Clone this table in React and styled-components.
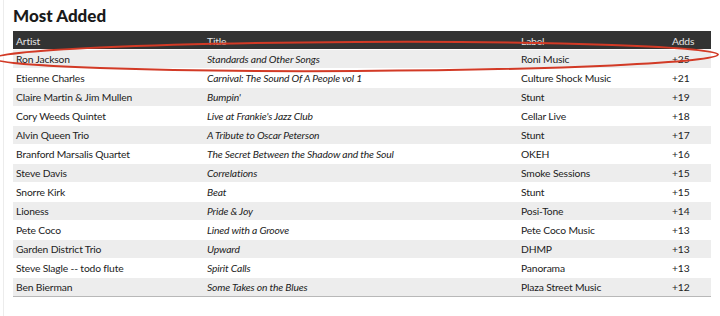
import React from "react";
import styled, { createGlobalStyle } from "styled-components";

const GlobalStyle = createGlobalStyle`
    html, body {
        margin: 0;
        padding: 0;
        background: #fff;
    }
    body {
        font-family: Lato, "Open Sans", sans-serif;
        color: #222;
    }
`;

const Page = styled.div`
    position: relative;
    width: 720px;
    height: 316px;
    overflow: hidden;
`;
const Panel = styled.div`
    margin-left: 3px;
    border-left: 1px solid #ececec;
    padding: 4px 9px 0 9px;
    height: 100%;
    box-sizing: border-box;
`;
const Title = styled.h2`
    margin: 0;
    height: 27px;
    font-size: 17px;
    line-height: 23px;
    font-weight: 900;
    color: #1a1a1a;
`;
const Table = styled.table`
    width: 698px;
    border-collapse: collapse;
    table-layout: fixed;
    font-size: 10.3px;
    letter-spacing: -0.15px;
    border-bottom: 1px solid #b8b8b8;
`;
const HeadCell = styled.th`
    box-sizing: border-box;
    background-color: #333;
    color: #e4e4e4;
    font-weight: 400;
    text-align: left;
    vertical-align: bottom;
    height: 18px;
    padding: 0 3px 2px 3px;
    width: ${props => props.w ? `${props.w}px` : "auto"};
`;
const Row = styled.tr`
    background-color: ${props => props.shaded ? "#ededed" : "#fff"};
    border-top: 1px solid #fff;
`;
const Cell = styled.td`
    box-sizing: border-box;
    height: 19px;
    padding: 1px 3px 0 3px;
    white-space: nowrap;
    overflow: hidden;
    font-style: ${props => props.italic ? "italic" : "normal"};
`;
const Circle = styled.svg`
    position: absolute;
    left: 0;
    top: 0;
    pointer-events: none;
`;

const rows = [
    ["Ron Jackson", "Standards and Other Songs", "Roni Music", "+25"],
    ["Etienne Charles", "Carnival: The Sound Of A People vol 1", "Culture Shock Music", "+21"],
    ["Claire Martin & Jim Mullen", "Bumpin'", "Stunt", "+19"],
    ["Cory Weeds Quintet", "Live at Frankie's Jazz Club", "Cellar Live", "+18"],
    ["Alvin Queen Trio", "A Tribute to Oscar Peterson", "Stunt", "+17"],
    ["Branford Marsalis Quartet", "The Secret Between the Shadow and the Soul", "OKEH", "+16"],
    ["Steve Davis", "Correlations", "Smoke Sessions", "+15"],
    ["Snorre Kirk", "Beat", "Stunt", "+15"],
    ["Lioness", "Pride & Joy", "Posi-Tone", "+14"],
    ["Pete Coco", "Lined with a Groove", "Pete Coco Music", "+13"],
    ["Garden District Trio", "Upward", "DHMP", "+13"],
    ["Steve Slagle -- todo flute", "Spirit Calls", "Panorama", "+13"],
    ["Ben Bierman", "Some Takes on the Blues", "Plaza Street Music", "+12"],
];

const App = () => (
    <>
        <GlobalStyle />
        <Page>
            <Panel>
                <Title>Most Added</Title>
                <Table>
                    <thead>
                        <tr>
                            <HeadCell w={191}>Artist</HeadCell>
                            <HeadCell w={314}>Title</HeadCell>
                            <HeadCell w={151}>Label</HeadCell>
                            <HeadCell>Adds</HeadCell>
                        </tr>
                    </thead>
                    <tbody>
                        {rows.map((r, i) => (
                            <Row key={r[0]} shaded={i % 2 === 0}>
                                <Cell>{r[0]}</Cell>
                                <Cell italic>{r[1]}</Cell>
                                <Cell>{r[2]}</Cell>
                                <Cell>{r[3]}</Cell>
                            </Row>
                        ))}
                    </tbody>
                </Table>
            </Panel>
            <Circle width="720" height="316" viewBox="0 0 720 316">
                <ellipse cx="356" cy="56.5" rx="362" ry="14.5" fill="none" stroke="#d23a26" strokeWidth="2" transform="rotate(-0.3 356 56.5)" />
            </Circle>
        </Page>
    </>
);

export default App;
